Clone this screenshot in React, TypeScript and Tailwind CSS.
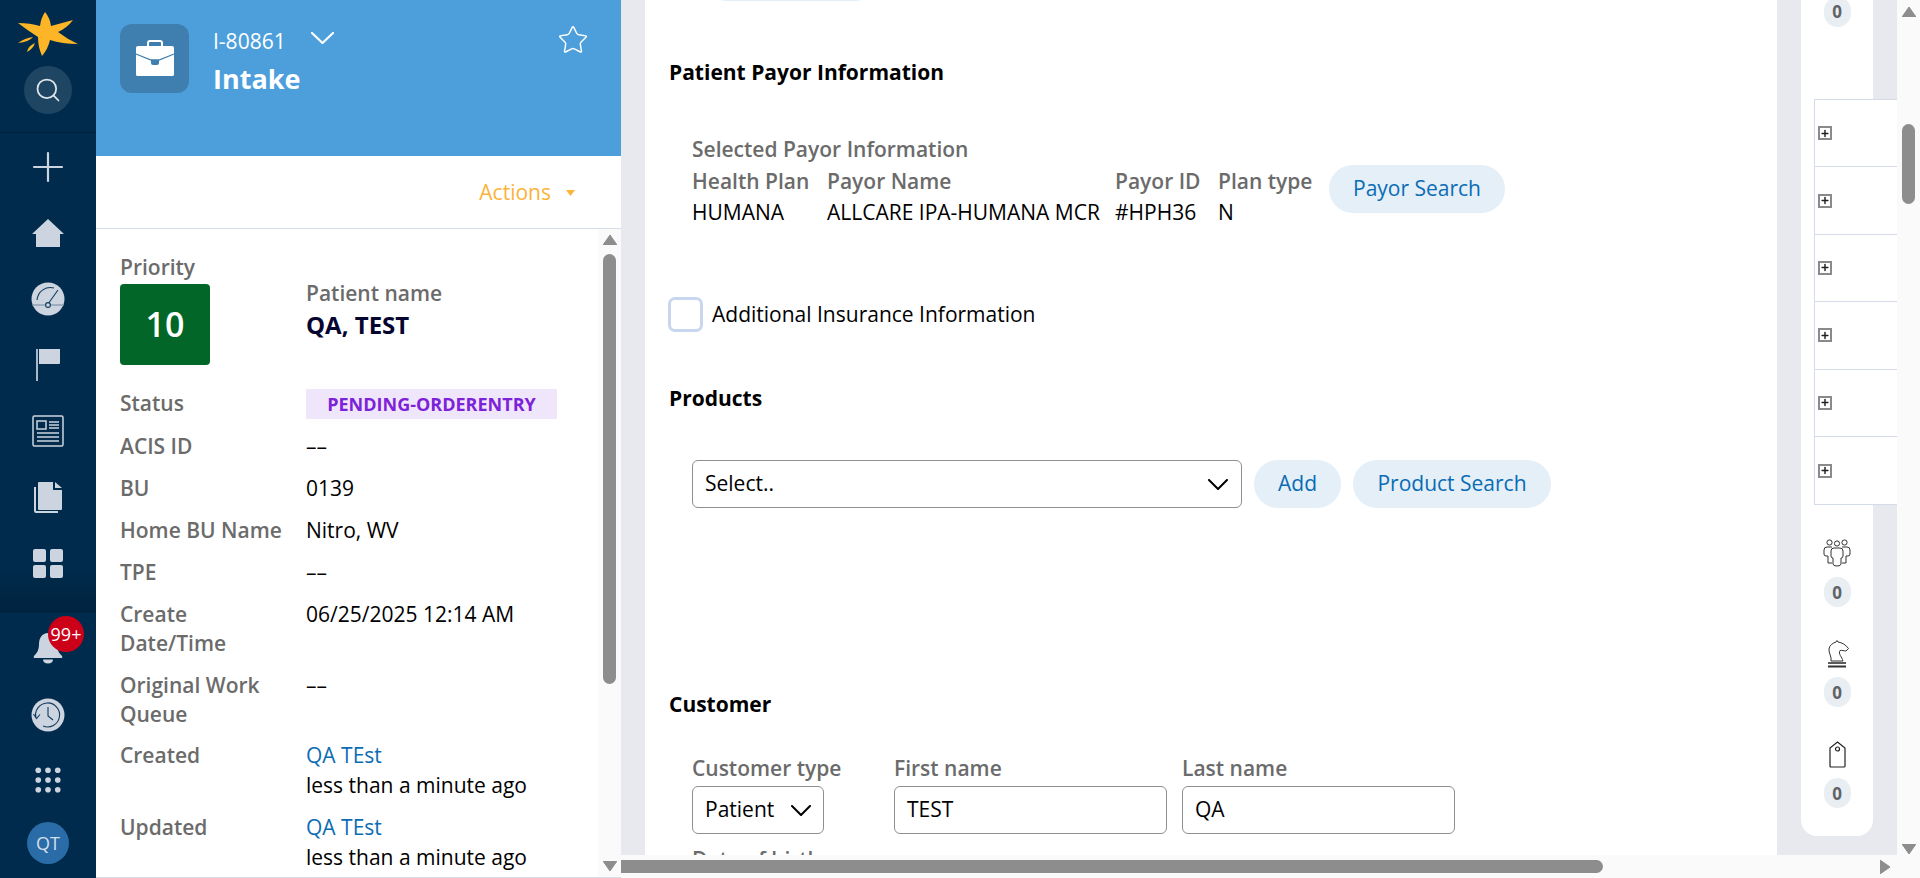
import { Plus, Search, Star } from "lucide-react";
import type { ReactNode } from "react";

const stroke = "#ccd5df";

function Chevron({ w = 20, h = 11, sw = 2, color = "#000", className = "" }: { w?: number; h?: number; sw?: number; color?: string; className?: string }) {
    return (
        <svg className={className} width={w} height={h} viewBox={`0 0 ${w} ${h}`} fill="none" stroke={color} strokeWidth={sw} strokeLinecap="round" strokeLinejoin="round">
            <path d={`M1 1 L${w / 2} ${h - 1} L${w - 1} 1`} />
        </svg>
    );
}

function NavIcon({ name }: { name: string }) {
    switch (name) {
        case "plus":
            return <Plus size={48} strokeWidth={1.1} color={stroke} />;
        case "home":
            return (
                <svg width="34" height="30" viewBox="0 0 34 30">
                    <path d="M17 1 L33 16 L29 16 L29 29 L5 29 L5 16 L1 16 Z" fill={stroke} />
                </svg>
            );
        case "gauge":
            return (
                <svg width="34" height="34" viewBox="0 0 34 34">
                    <circle cx="17" cy="17" r="16.5" fill={stroke} />
                    <path d="M1 23 H33" stroke="#7f93a6" strokeWidth="1.2" />
                    <path d="M6 18 C7 9 15 4 23 6 M17 22 L27 8" stroke="#12395a" strokeWidth="1.1" fill="none" />
                    <circle cx="17" cy="23" r="2.4" fill={stroke} stroke="#12395a" strokeWidth="1.1" />
                </svg>
            );
        case "flag":
            return (
                <svg width="26" height="34" viewBox="0 0 26 34">
                    <path d="M1 1 H3 V33 H1 Z" fill="#a9b9c8" />
                    <path d="M4 1 H25 V15 Q25 16 24 16 H4 Z" fill={stroke} />
                </svg>
            );
        case "news":
            return (
                <svg width="32" height="32" viewBox="0 0 32 32" fill="none" stroke={stroke} strokeWidth="1.5">
                    <rect x="1" y="1" width="30" height="30" rx="1.5" />
                    <rect x="5" y="6" width="9" height="8" />
                    <path d="M17 7 H27 M17 10 H27 M17 13 H27 M5 18 H27 M5 22 H27 M5 26 H27" />
                </svg>
            );
        case "docs":
            return (
                <svg width="30" height="33" viewBox="0 0 30 33">
                    <path d="M1 6 H3 V30 H25 V32 H3 Q1 32 1 30 Z" fill={stroke} />
                    <path d="M5 2 Q5 1 6 1 H20 V9 H29 V28 Q29 29 28 29 H6 Q5 29 5 28 Z" fill={stroke} />
                    <path d="M22 1 L29 7 H22 Z" fill={stroke} />
                </svg>
            );
        case "grid":
            return (
                <svg width="32" height="31" viewBox="0 0 32 31" fill={stroke}>
                    <rect x="1" y="1" width="13" height="13" rx="2" />
                    <rect x="18" y="1" width="13" height="13" rx="2" />
                    <rect x="1" y="17" width="13" height="13" rx="2" />
                    <rect x="18" y="17" width="13" height="13" rx="2" />
                </svg>
            );
        case "bell":
            return (
                <svg width="30" height="32" viewBox="0 0 30 32" fill={stroke}>
                    <path d="M15 1 C9 1 6 6 6 12 C6 18 4 21 1 24 Q0 26 2 26 H28 Q30 26 29 24 C26 21 24 18 24 12 C24 6 21 1 15 1 Z" />
                    <path d="M10 27.5 H20 C20 30 18 31.5 15 31.5 C12 31.5 10 30 10 27.5 Z" />
                </svg>
            );
        case "history":
            return (
                <svg width="34" height="34" viewBox="0 0 34 34">
                    <circle cx="17" cy="17" r="16.5" fill={stroke} />
                    <path d="M5 20 A12 12 0 1 1 12 28 M2.5 16 L5.5 20.5 L9 16.5 M17 9 V18 L22 22" stroke="#12395a" strokeWidth="1.1" fill="none" />
                </svg>
            );
        default:
            return (
                <svg width="26" height="26" viewBox="0 0 24 24" fill={stroke}>
                    {[3, 12, 21].map((y) =>
                        [3, 12, 21].map((x) => <circle key={`${x}-${y}`} cx={x} cy={y} r="2.6" />)
                    )}
                </svg>
            );
    }
}

function Logo() {
    return (
        <svg width="62" height="46" viewBox="0 0 62 46" fill="#fbb527">
            <path d="M28 1 Q33 7 34 15 L56 9 Q50 17 41 21 Q50 28 61 33 Q45 33 33 29 Q31 38 25 45 Q21 36 21 26 Q10 19 1 12 Q13 12 23 15 Q24 7 28 1 Z" />
            <path d="M1 32 Q8 27 16 26 Q12 31 1 32 Z" />
            <path d="M10 41 Q11 35 18 32 Q16 38 10 41 Z" />
        </svg>
    );
}

function Nav() {
    const upper = ["plus", "home", "gauge", "flag", "news", "docs", "grid"];
    return (
        <div className="flex h-full w-24 shrink-0 flex-col items-center bg-[#002b4c]">
            <div className="flex h-[133px] w-full flex-col items-center border-b border-[#00213c] pt-[11px]">
                <Logo />
                <div className="mt-[9px] flex h-12 w-12 items-center justify-center rounded-full bg-[#1e4562]">
                    <Search size={28} strokeWidth={1.5} color="#dfe5ea" />
                </div>
            </div>
            <div className="flex h-[480px] w-full flex-col items-center bg-gradient-to-b from-[#002b4c] from-90% to-[#00233f] pt-[1px]">
                {upper.map((n) => (
                    <div key={n} className="flex h-[66px] items-center justify-center">
                        <NavIcon name={n} />
                    </div>
                ))}
            </div>
            <div className="relative flex h-[70px] items-center justify-center">
                <NavIcon name="bell" />
                <span className="absolute left-[15px] top-[3px] flex h-9 w-9 items-center justify-center rounded-full bg-[#cc0018] text-[18px] text-white">
                    99+
                </span>
            </div>
            <div className="flex h-[64px] items-center justify-center">
                <NavIcon name="history" />
            </div>
            <div className="flex h-[66px] items-center justify-center">
                <NavIcon name="dots" />
            </div>
            <div className="mt-[9px] flex h-[42px] w-[42px] items-center justify-center rounded-full bg-[#2a6ca8] text-[18px] text-[#d5dfea]">
                QT
            </div>
        </div>
    );
}

function Row({ label, children, className }: { label: ReactNode; children?: ReactNode; className: string }) {
    return (
        <div className={`grid grid-cols-[186px_1fr] leading-[29px] ${className}`}>
            <div className="font-semibold text-[#6b6b6b]">{label}</div>
            <div className="text-black">{children}</div>
        </div>
    );
}

function ScrollArrow({ dir }: { dir: "up" | "down" | "right" }) {
    const d = dir === "up" ? "M7 0 L14 10 H0 Z" : dir === "down" ? "M0 0 H14 L7 10 Z" : "M0 0 L10 7 L0 14 Z";
    const size = dir === "right" ? { w: 10, h: 14 } : { w: 14, h: 10 };
    return (
        <svg width={size.w} height={size.h} viewBox={`0 0 ${size.w} ${size.h}`}>
            <path d={d} fill="#8d8d8d" strokeLinejoin="round" stroke="#8d8d8d" strokeWidth="1" />
        </svg>
    );
}

function LeftPanel() {
    return (
        <div className="flex h-full w-[525px] shrink-0 flex-col bg-white">
            <div className="flex h-[156px] bg-[#4d9fdc] pl-6 pt-6 pr-[32px] text-white">
                <div className="flex h-[69px] w-[69px] items-center justify-center rounded-xl bg-[#3f7fb0]">
                    <svg width="40" height="37" viewBox="0 0 40 37">
                        <path d="M13 7 V3 Q13 1 15 1 H25 Q27 1 27 3 V7" fill="none" stroke="#fff" strokeWidth="2" />
                        <path d="M1 8 Q1 6 3 6 H37 Q39 6 39 8 V35 Q39 36 37 36 H3 Q1 36 1 35 Z" fill="#fff" />
                        <path d="M1 14 L16 20 H24 L39 14" fill="none" stroke="#3f7fb0" strokeWidth="1.3" />
                        <path d="M16 20 H24 V23 Q24 25 22 25 H18 Q16 25 16 23 Z" fill="#3f7fb0" />
                    </svg>
                </div>
                <div className="ml-[24px] flex-1">
                    <div className="flex h-[34px] items-center pt-[1px]">
                        <span className="text-[21px]">I-80861</span>
                        <Chevron w={23} h={12} sw={2.2} color="#fff" className="ml-[25px] -mt-[7px]" />
                    </div>
                    <div className="text-[27px] font-bold leading-[42px]">Intake</div>
                </div>
                <Star size={32} strokeWidth={1.1} />
            </div>
            <div className="flex h-[73px] items-center justify-end border-b border-[#d8dee8] pr-[46px] pt-[2px] text-[21px] text-[#fbb33a]">
                <span>Actions</span>
                <svg className="ml-[15px]" width="9" height="6" viewBox="0 0 9 6">
                    <path d="M0 0 H9 L4.5 6 Z" fill="#fbb33a" />
                </svg>
            </div>
            <div className="flex min-h-0 flex-1 overflow-hidden border-b border-[#d8dee8]">
                <div className="w-[502px] shrink-0 pl-6 pt-[23px] text-[21px]">
                    <div className="h-[30px] font-semibold leading-[30px] text-[#6b6b6b]">Priority</div>
                    <div className="flex">
                        <div className="mt-[2px] flex h-[81px] w-[90px] items-center justify-center rounded-[4px] bg-[#026628] text-[34px] font-semibold text-white">
                            10
                        </div>
                        <div className="ml-[96px] -mt-[3px]">
                            <div className="font-semibold leading-[29px] text-[#6b6b6b]">Patient name</div>
                            <div className="mt-[1px] text-[24px] font-bold leading-[32px] text-[#050530]">QA, TEST</div>
                        </div>
                    </div>
                    <Row label="Status" className="mt-[23px] items-center">
                        <div className="mt-[1px] flex h-[30px] w-[251px] items-center justify-center bg-[#f0e6fb] text-[18px] font-bold text-[#7c22d8]">
                            PENDING-ORDERENTRY
                        </div>
                    </Row>
                    <Row label="ACIS ID" className="mt-[13px]">––</Row>
                    <Row label="BU" className="mt-[13px]">0139</Row>
                    <Row label="Home BU Name" className="mt-[13px]">Nitro, WV</Row>
                    <Row label="TPE" className="mt-[13px]">––</Row>
                    <Row label={<>Create<br />Date/Time</>} className="mt-[13px]">06/25/2025 12:14 AM</Row>
                    <Row label={<>Original Work<br />Queue</>} className="mt-[13px]">––</Row>
                    <Row label="Created" className="mt-[12px]">
                        <div className="text-[#0a6cb4]">QA TEst</div>
                        <div className="mt-[1px]">less than a minute ago</div>
                    </Row>
                    <Row label="Updated" className="mt-[13px]">
                        <div className="text-[#0a6cb4]">QA TEst</div>
                        <div className="mt-[1px]">less than a minute ago</div>
                    </Row>
                </div>
                <div className="flex flex-1 flex-col items-center bg-[#fafafa] pt-[6px] pb-[6px]">
                    <ScrollArrow dir="up" />
                    <div className="mt-[9px] h-[430px] w-[13px] rounded-full bg-[#8d8d8d]" />
                    <div className="flex-1" />
                    <ScrollArrow dir="down" />
                </div>
            </div>
        </div>
    );
}

function Pill({ children, className }: { children: ReactNode; className: string }) {
    return (
        <div className={`flex h-12 items-center justify-center rounded-full bg-[#e4eff8] text-[#0a6cb4] ${className}`}>
            {children}
        </div>
    );
}

function Field({ label, value, className }: { label: string; value: string; className: string }) {
    return (
        <div className={className}>
            <div className="h-[28px] font-semibold leading-[28px] text-[#6b6b6b]">{label}</div>
            <div className="mt-[4px] flex h-[48px] items-center rounded-[6px] border border-[#8f8f8f] px-3 text-black">{value}</div>
        </div>
    );
}

function FormArea() {
    return (
        <div className="h-full w-[1132px] shrink-0 overflow-hidden bg-white pl-6 text-[21px]">
            <div className="-mt-[47px] ml-[34px] h-12 w-[175px] rounded-full bg-[#e4eff8]" />
            <div className="mt-[42px] font-bold leading-[58px] text-black">Patient Payor Information</div>
            <div className="ml-[23px] mt-[32px]">
                <div className="font-semibold leading-[32px] text-[#6b6b6b]">Selected Payor Information</div>
                <div className="flex">
                    <div className="w-[135px]">
                        <div className="font-semibold leading-[32px] text-[#6b6b6b]">Health Plan</div>
                        <div className="leading-[31px] text-black">HUMANA</div>
                    </div>
                    <div className="w-[288px]">
                        <div className="font-semibold leading-[32px] text-[#6b6b6b]">Payor Name</div>
                        <div className="leading-[31px] text-black">ALLCARE IPA-HUMANA MCR</div>
                    </div>
                    <div className="w-[103px]">
                        <div className="font-semibold leading-[32px] text-[#6b6b6b]">Payor ID</div>
                        <div className="leading-[31px] text-black">#HPH36</div>
                    </div>
                    <div className="w-[111px]">
                        <div className="font-semibold leading-[32px] text-[#6b6b6b]">Plan type</div>
                        <div className="leading-[31px] text-black">N</div>
                    </div>
                    <Pill className="w-[176px]">Payor Search</Pill>
                </div>
            </div>
            <div className="mt-[69px] flex items-center">
                <div className="-ml-[1px] h-[35px] w-[35px] rounded-[7px] border-[3px] border-[#c9d6ef]" />
                <span className="ml-[9px] text-black">Additional Insurance Information</span>
            </div>
            <div className="mt-[51px] font-bold leading-[30px] text-black">Products</div>
            <div className="ml-[23px] mt-[47px] flex items-center">
                <div className="flex h-12 w-[550px] items-center justify-between rounded-[6px] border border-[#8f8f8f] pl-3 pr-[13px] text-black">
                    <span>Select..</span>
                    <Chevron />
                </div>
                <Pill className="ml-3 w-[87px]">Add</Pill>
                <Pill className="ml-3 w-[198px]">Product Search</Pill>
            </div>
            <div className="mt-[181px] font-bold leading-[30px] text-black">Customer</div>
            <div className="ml-[23px] mt-[35px] flex">
                <div className="w-[202px]">
                    <div className="h-[28px] font-semibold leading-[28px] text-[#6b6b6b]">Customer type</div>
                    <div className="mt-[4px] flex h-[48px] w-[132px] items-center justify-between rounded-[6px] border border-[#8f8f8f] pl-3 pr-[12px] text-black">
                        <span>Patient</span>
                        <Chevron />
                    </div>
                </div>
                <Field label="First name" value="TEST" className="w-[273px]" />
                <Field label="Last name" value="QA" className="ml-[15px] w-[273px]" />
            </div>
            <div className="ml-[23px] mt-[11px] font-semibold leading-[29px] text-[#6b6b6b]">Date of birth</div>
        </div>
    );
}

function Badge() {
    return (
        <div className="flex h-[30px] w-[27px] items-center justify-center rounded-full bg-[#e9eef3] text-[17px] font-bold text-[#5f6368]">
            0
        </div>
    );
}

function Sidebar() {
    return (
        <div className="flex w-[120px] shrink-0 flex-col bg-[#e7e9ef] pl-6">
            <div className="flex h-[836px] w-[72px] flex-col items-center rounded-b-2xl bg-white">
                <div className="-mt-[3px]">
                    <Badge />
                </div>
                <div className="relative z-10 ml-[13px] mt-[72px] w-[83px] self-start border-y border-l border-[#d5dbe8] bg-white">
                    {[0, 1, 2, 3, 4, 5].map((i) => (
                        <div key={i} className={`flex h-[67.4px] items-center pl-[3px] ${i < 5 ? "border-b border-[#d5dbe8]" : ""}`}>
                            <div className="flex h-[14px] w-[14px] items-center justify-center border-2 border-[#8a8a8a] bg-white">
                                <Plus size={11} strokeWidth={3.5} color="#222" />
                            </div>
                        </div>
                    ))}
                </div>
                <div className="mt-[34px] h-[28px]">
                    <svg width="28" height="28" viewBox="0 0 28 28" fill="none" stroke="#333" strokeWidth="1">
                        <circle cx="6.5" cy="3.5" r="2.6" />
                        <circle cx="14" cy="4.5" r="2.6" />
                        <circle cx="21.5" cy="3.5" r="2.6" />
                        <path d="M9 8 H4 Q1 8 1 11 V15 Q1 17 3 17 H5 V24 H9" />
                        <path d="M19 8 H24 Q27 8 27 11 V15 Q27 17 25 17 H23 V24 H19" />
                        <path d="M11 9 H17 Q20 9 20 12 V17 Q20 19 18 19 V25 Q18 27 14 27 Q10 27 10 25 V19 Q8 19 8 17 V12 Q8 9 11 9 Z" fill="#fff" />
                    </svg>
                </div>
                <div className="mt-[10px]"><Badge /></div>
                <div className="ml-[4px] mt-[33px] h-[28px]">
                    <svg width="24" height="28" viewBox="0 0 24 28" fill="none" stroke="#333" strokeWidth="1">
                        <path d="M4 21 C5 17 1.5 13 2 9 C2.5 5 6 3 9 2 L10 0.5 L11 2 C15 2.5 19 5 21.5 8.5 L19 11 C17 11 15 10 13 10.5 C11 14 15 17 16 21 Z" />
                        <path d="M1 23 H19" strokeWidth="1.6" />
                        <path d="M1 26.5 H19" strokeWidth="2" />
                    </svg>
                </div>
                <div className="mt-[9px]"><Badge /></div>
                <div className="mt-[34px] h-[27px]">
                    <svg width="17" height="27" viewBox="0 0 17 27" fill="none" stroke="#222" strokeWidth="1.2">
                        <path d="M8.5 1 L16 7 V25 Q16 26 15 26 H2 Q1 26 1 25 V7 Z" />
                        <circle cx="8.5" cy="8" r="2" />
                    </svg>
                </div>
                <div className="mt-[10px]"><Badge /></div>
            </div>
        </div>
    );
}

export default function App() {
    return (
        <div className="flex h-[878px] w-[1920px] overflow-hidden bg-[#e7e9ef] font-['Open_Sans',sans-serif]">
            <Nav />
            <LeftPanel />
            <div className="flex min-w-0 flex-1 flex-col">
                <div className="flex h-[855px] overflow-hidden">
                    <div className="w-6 shrink-0 bg-[#e7e9ef]" />
                    <FormArea />
                    <Sidebar />
                    <div className="flex flex-1 flex-col items-center bg-[#fafafa] pt-[7px] pb-[1px]">
                        <ScrollArrow dir="up" />
                        <div className="mt-[107px] h-[80px] w-[13px] rounded-full bg-[#8d8d8d]" />
                        <div className="flex-1" />
                        <ScrollArrow dir="down" />
                    </div>
                </div>
                <div className="flex h-[23px] items-center bg-[#fafafa] pr-[30px]">
                    <div className="h-[13px] w-[982px] rounded-r-full bg-[#8d8d8d]" />
                    <div className="flex-1" />
                    <ScrollArrow dir="right" />
                </div>
            </div>
        </div>
    );
}
